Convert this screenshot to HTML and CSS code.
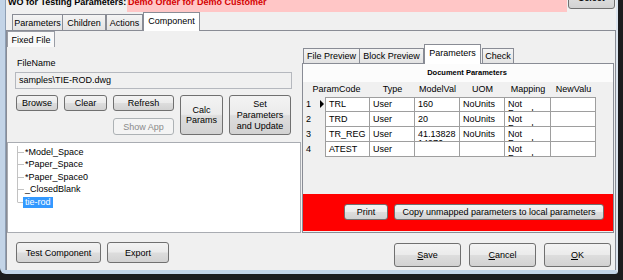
FILE: index.html
```html
<!DOCTYPE html>
<html>
<head>
<meta charset="utf-8">
<title>WO for Testing Parameters</title>
<link rel="stylesheet" href="styles.css">
</head>
<body>
<div class="frame">
  <div class="dialog">
    <div class="titlebar">
      <div class="title"><span class="shift">WO for Testing Parameters:</span></div>
      <div class="order"><span class="shift">Demo Order for Demo Customer</span></div>
      <div class="select-wrap"><button class="btn select">Select</button></div>
    </div>

    <div class="tabstrip main-tabs">
      <div class="tab w-params">Parameters</div>
      <div class="tab w-children">Children</div>
      <div class="tab w-actions">Actions</div>
      <div class="tab active w-component">Component</div>
    </div>

    <div class="main-panel">
      <div class="subtabs">
        <div class="tab sub w-fixed">Fixed File</div>
      </div>

      <div class="content">
        <div class="left">
          <div class="label">FileName</div>
          <div class="field">samples\TIE-ROD.dwg</div>
          <div class="btn-grid">
            <button class="btn b-browse">Browse</button>
            <button class="btn b-clear">Clear</button>
            <button class="btn b-refresh">Refresh</button>
            <button class="btn b-calc">Calc<br>Params</button>
            <button class="btn b-set">Set<br>Parameters<br>and Update</button>
            <button class="btn disabled b-show">Show App</button>
          </div>
          <div class="tree">
            <ul>
              <li><span class="tick"></span><span class="node">*Model_Space</span></li>
              <li><span class="tick"></span><span class="node">*Paper_Space</span></li>
              <li><span class="tick"></span><span class="node">*Paper_Space0</span></li>
              <li><span class="tick"></span><span class="node">_ClosedBlank</span></li>
              <li class="last"><span class="tick"></span><span class="node selected">tie-rod</span></li>
            </ul>
          </div>
        </div>

        <div class="right">
          <div class="tabstrip right-tabs">
            <div class="tab small w-file">File Preview</div>
            <div class="tab small w-block">Block Preview</div>
            <div class="tab small active w-ptab">Parameters</div>
            <div class="tab small w-check">Check</div>
          </div>
          <div class="right-panel">
            <div class="docbar">Document Parameters</div>
            <div class="grid">
              <div class="gh gh-code">ParamCode</div>
              <div class="gh">Type</div>
              <div class="gh">ModelVal</div>
              <div class="gh">UOM</div>
              <div class="gh">Mapping</div>
              <div class="gh">NewValu</div>

              <div class="rh">1<span class="pointer"></span></div>
              <div class="c first-col first-row">TRL</div>
              <div class="c first-row">User</div>
              <div class="c first-row">160</div>
              <div class="c first-row">NoUnits</div>
              <div class="c first-row">Not Found</div>
              <div class="c first-row"></div>

              <div class="rh">2</div>
              <div class="c first-col">TRD</div>
              <div class="c">User</div>
              <div class="c">20</div>
              <div class="c">NoUnits</div>
              <div class="c">Not Found</div>
              <div class="c"></div>

              <div class="rh">3</div>
              <div class="c first-col">TR_REG</div>
              <div class="c">User</div>
              <div class="c">41.13828 14976</div>
              <div class="c">NoUnits</div>
              <div class="c">Not Found</div>
              <div class="c"></div>

              <div class="rh">4</div>
              <div class="c first-col">ATEST</div>
              <div class="c">User</div>
              <div class="c"></div>
              <div class="c"></div>
              <div class="c">Not Found</div>
              <div class="c"></div>
            </div>
            <div class="spacer"></div>
            <div class="redbar">
              <button class="btn b-print">Print</button>
              <button class="btn b-copy">Copy unmapped parameters to local parameters</button>
            </div>
          </div>
        </div>
      </div>

      <div class="bottom">
        <button class="btn b-test">Test Component</button>
        <button class="btn b-export">Export</button>
        <div class="dlg-buttons">
          <button class="btn b-dlg"><u>S</u>ave</button>
          <button class="btn b-dlg"><u>C</u>ancel</button>
          <button class="btn b-dlg"><u>O</u>K</button>
        </div>
      </div>
    </div>
  </div>
</div>
</body>
</html>
```

FILE: styles.css
```css
* { box-sizing: border-box; }
html, body { margin: 0; padding: 0; }
body {
  width: 623px;
  height: 280px;
  overflow: hidden;
  background: #1c1c1e;
  font-family: "Liberation Sans", Arial, sans-serif;
  font-size: 9px;
  color: #000;
}

.frame {
  width: 618px;
  height: 274px;
  background: #f0f0f0;
  border-left: 5px solid #c3d4e7;
  border-right: 2px solid #dce5ef;
  border-bottom: 4px solid #c3d4e7;
  border-bottom-left-radius: 6px;
  border-bottom-right-radius: 3px;
}

.dialog {
  height: 270px;
  border-left: 1px solid #8e9fb4;
  display: flex;
  flex-direction: column;
  overflow: hidden;
}

/* title row */
.titlebar { height: 12px; flex: none; display: flex; overflow: hidden; }
.shift { display: block; margin-top: -4px; line-height: 12px; white-space: nowrap; }
.title { width: 121px; padding-left: 2px; font-weight: bold; }
.order { flex: 1; background: #ffc6c6; color: #d40000; font-weight: bold; padding-left: 1px; }
.select-wrap { width: 49px; padding-left: 1px; }
.btn.select { width: 47px; height: 22px; margin-top: -13px; display: block; font-weight: bold; }

/* tabs */
.tabstrip { display: flex; align-items: flex-end; flex: none; position: relative; z-index: 1; }
.main-tabs { height: 18px; padding-left: 6px; }
.tab {
  height: 16px;
  border: 1px solid #898c95;
  border-bottom: none;
  background: linear-gradient(#f4f4f4, #e3e3e3);
  display: flex;
  align-items: center;
  justify-content: center;
  white-space: nowrap;
  flex: none;
}
.tab.active { height: 19px; margin-bottom: -1px; background: #fff; padding-bottom: 2px; }
.w-params { width: 51px; }
.w-children { width: 43px; border-left: none; }
.w-actions { width: 37px; }
.w-component { width: 57px; }

.main-panel {
  flex: 1;
  border: 1px solid #898c95;
  border-bottom: none;
  display: flex;
  flex-direction: column;
}

.subtabs { display: flex; height: 16px; flex: none; }
.tab.sub { height: 16px; background: #f9f9f9; border-color: #9a9da5; }
.w-fixed { width: 48px; }

.content { display: flex; height: 186px; flex: none; }

/* left column */
.left { width: 294px; flex: none; display: flex; flex-direction: column; }
.label { margin-top: 11px; padding-left: 10px; line-height: 11px; }
.field {
  margin: 3px 0 0 8px;
  width: 277px;
  height: 17px;
  border: 1px solid #b5b8be;
  background: #f0f0f0;
  padding-left: 3px;
  line-height: 15px;
}
.btn-grid {
  margin: 6px 0 0 9px;
  display: grid;
  grid-template-columns: 42px 43px 61px 43px 62px;
  grid-template-rows: 16px 17px;
  column-gap: 6px;
  row-gap: 7px;
}
.b-browse { grid-column: 1; grid-row: 1; }
.b-clear { grid-column: 2; grid-row: 1; }
.b-refresh { grid-column: 3; grid-row: 1; }
.b-show { grid-column: 3; grid-row: 2; }
.b-calc { grid-column: 4; grid-row: 1 / 3; line-height: 10px; }
.b-set { grid-column: 5; grid-row: 1 / 3; line-height: 11px; }

.btn {
  font-family: inherit;
  font-size: 9px;
  color: #000;
  border: 1px solid #707070;
  border-radius: 3px;
  background: linear-gradient(#f3f3f3 0%, #ebebeb 48%, #dddddd 52%, #d2d2d2 100%);
  padding: 0;
  margin: 0;
  white-space: nowrap;
}
.btn.disabled {
  border-color: #adb2b5;
  background: #f4f4f4;
  color: #8a8a8a;
}

.tree {
  margin-top: 7px;
  height: 91px;
  border: 1px solid #a9acb2;
  background: #fff;
  padding-top: 3px;
}
.tree ul { list-style: none; margin: 0 0 0 9px; padding: 0; }
.tree li {
  height: 12.5px;
  display: flex;
  align-items: center;
  border-left: 1px solid #c2c2c2;
}
.tree li.last {
  border-left: none;
  padding-left: 1px;
  background: linear-gradient(#c2c2c2, #c2c2c2) no-repeat 0 0 / 1px 50%;
}
.tick { width: 6px; height: 0; border-top: 1px solid #c2c2c2; flex: none; }
.node { padding: 0 1px 0 1px; line-height: 11px; }
.node.selected { background: #3399ff; color: #fff; margin-left: -1px; padding: 0 2px; }

/* right column */
.right { width: 313px; flex: none; margin-top: -3px; display: flex; flex-direction: column; }
.right-tabs { height: 19px; padding-left: 2px; }
.tab.small { height: 15px; }
.tab.small.active { height: 20px; padding-bottom: 3px; }
.w-file { width: 57px; }
.w-block { width: 64px; border-left: none; }
.w-ptab { width: 57px; }
.w-check { width: 32px; margin-left: 1px; }

.right-panel {
  margin-left: 1px;
  width: 312px;
  height: 170px;
  border: 1px solid #898c95;
  background: #f0f0f0;
  display: flex;
  flex-direction: column;
}
.docbar {
  height: 18px;
  flex: none;
  background: #fcfcfc;
  text-align: center;
  font-weight: bold;
  font-size: 7.5px;
  line-height: 18px;
  padding-left: 18px;
}
.grid {
  flex: none;
  display: grid;
  grid-template-columns: 22px 45px 45px 45px 45px 46px 45px;
  grid-template-rows: 15px 15px 15px 15px 15px;
}
.gh { text-align: center; line-height: 15px; white-space: nowrap; overflow: hidden; }
.gh-code { grid-column: 1 / 3; }
.rh {
  padding-left: 3px;
  padding-top: 2px;
  line-height: 10px;
  display: flex;
  align-items: flex-start;
  justify-content: space-between;
}
.pointer {
  width: 0;
  height: 0;
  margin-top: 1px;
  margin-right: 1px;
  border-left: 4px solid #000;
  border-top: 4px solid transparent;
  border-bottom: 4px solid transparent;
}
.c {
  background: #fff;
  border-right: 1px solid #9e9e9e;
  border-bottom: 1px solid #9e9e9e;
  padding: 2.5px 2px 0 3px;
  line-height: 9px;
  overflow: hidden;
}
.c.first-col { border-left: 1px solid #9e9e9e; }
.c.first-row { padding-top: 1.5px; border-top: 1px solid #9e9e9e; }

.spacer { flex: 1; }
.redbar {
  height: 37px;
  flex: none;
  margin-bottom: 1px;
  background: #ff0000;
  display: flex;
  justify-content: flex-end;
  align-items: flex-start;
  gap: 6px;
  padding: 10px 9px 0 0;
}
.b-print { width: 44px; height: 16px; }
.b-copy { width: 210px; height: 16px; }

/* bottom row */
.bottom {
  flex: 1;
  display: flex;
  align-items: flex-start;
  padding: 9px 4px 0 9px;
  gap: 6px;
}
.b-test { width: 85px; height: 21px; }
.b-export { width: 62px; height: 21px; }
.dlg-buttons { margin-left: auto; margin-top: 1px; display: flex; gap: 8px; }
.b-dlg { width: 67px; height: 24px; }
.b-dlg u { text-decoration: underline; }
```
